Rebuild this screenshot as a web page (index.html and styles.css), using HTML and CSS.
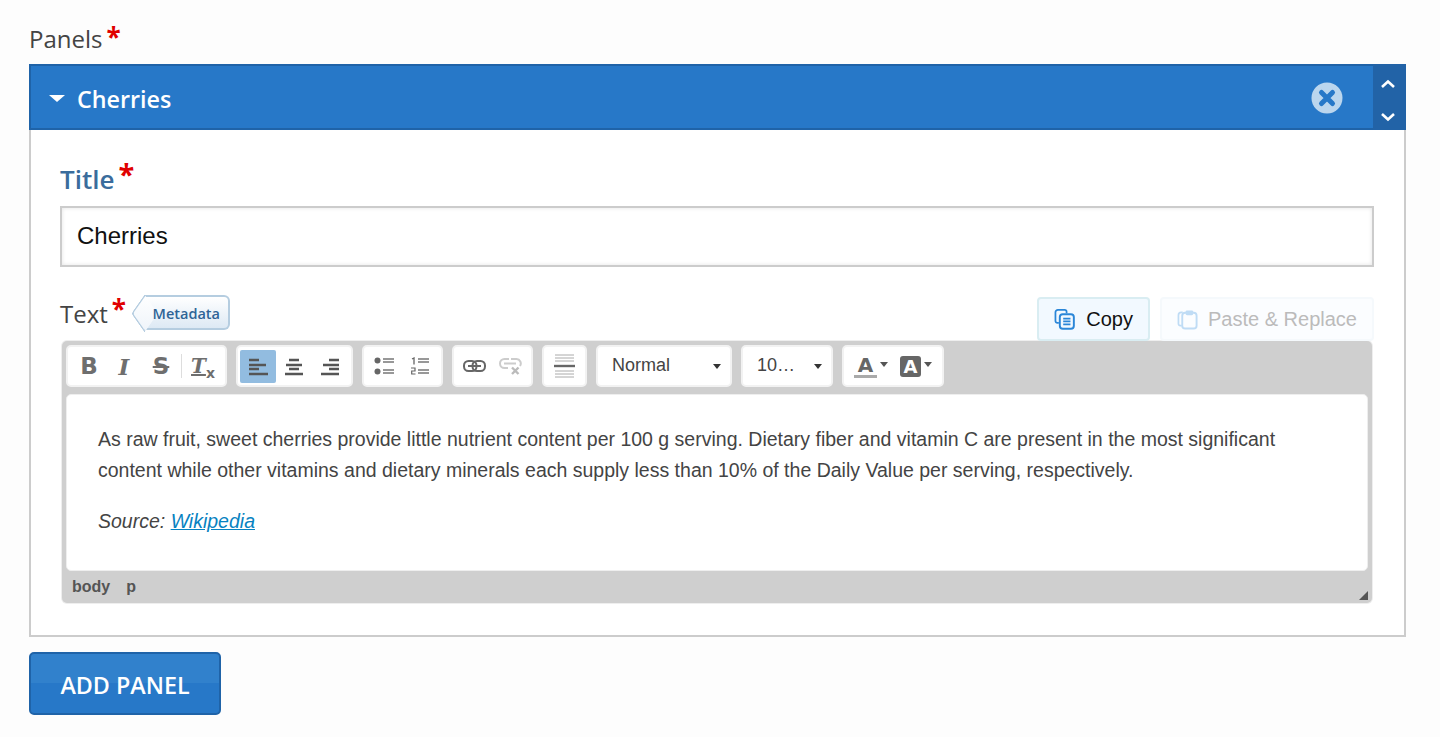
FILE: index.html
```html
<!DOCTYPE html>
<html lang="en">
<head>
<meta charset="utf-8">
<title>Panels</title>
<link rel="stylesheet" href="styles.css">
</head>
<body>
<main class="page">
  <div class="panels-label">Panels<span class="req">*</span></div>
  <section class="panel">
    <header class="panel-head">
      <span class="caret"></span>
      <span class="panel-title">Cherries</span>
      <svg class="close" width="32" height="32" viewBox="0 0 32 32"><circle cx="16" cy="16" r="15.5" fill="#bbd6ee"/><path d="M10.5 10.5l11 11M21.5 10.5l-11 11" stroke="#2778c8" stroke-width="5" stroke-linecap="round"/></svg>
      <div class="handle">
        <svg width="16" height="10" viewBox="0 0 16 10"><path d="M2 8l6-5.500L14 8" fill="none" stroke="#fff" stroke-width="2.600"/></svg>
        <svg width="16" height="10" viewBox="0 0 16 10"><path d="M2 2l6 5.500L14 2" fill="none" stroke="#fff" stroke-width="2.600"/></svg>
      </div>
    </header>
    <div class="panel-body">
      <div class="title-label">Title<span class="req">*</span></div>
      <div class="input">Cherries</div>
      <div class="text-row">
        <div class="text-label">Text<span class="req">*</span><span class="tag"><span class="tag-text">Metadata</span></span></div>
        <div class="actions">
          <button class="act act-copy">
            <svg width="22" height="22" viewBox="0 0 22 22"><path d="M5 15H3.500A2 2 0 0 1 1.500 13V4A2.500 2.500 0 0 1 4 1.500h7A2 2 0 0 1 13 3.500V5" fill="none" stroke="#2a86d8" stroke-width="1.800"/><rect x="6" y="6" width="14.500" height="15" rx="3" fill="none" stroke="#2a86d8" stroke-width="2"/><path d="M9.500 10.500h7.500M9.500 13.500h7.500M9.500 16.500h7.500" stroke="#2a86d8" stroke-width="1.800"/></svg>
            Copy
          </button>
          <button class="act act-paste">
            <svg width="22" height="22" viewBox="0 0 22 22"><path d="M5 18H3.500A2 2 0 0 1 1.500 16V7A3 3 0 0 1 4.500 4H6" fill="none" stroke="#bfdcf5" stroke-width="1.800"/><rect x="5.500" y="4.500" width="15" height="16.500" rx="3" fill="none" stroke="#bfdcf5" stroke-width="2"/><rect x="9" y="2" width="8" height="5" rx="1.500" fill="#bfdcf5"/></svg>
            Paste &amp; Replace
          </button>
        </div>
      </div>
      <div class="editor">
        <div class="toolbar">
          <div class="group group-basic">
            <span class="btn g-b">B</span>
            <span class="btn g-i">I</span>
            <span class="btn g-s">S</span>
            <span class="sep"></span>
            <span class="btn g-t"><span class="g-t-letter">T</span><small>x</small></span>
          </div>
          <div class="group group-align">
            <span class="btn on"><svg width="20" height="19" viewBox="0 0 20 19"><path d="M1 3h10M1 8h17M1 12h10M1 17h19" stroke="#555" stroke-width="2.600"/></svg></span>
            <span class="btn"><svg width="20" height="19" viewBox="0 0 20 19"><path d="M5 3h10M2 8h16M5 12h10M1 17h18" stroke="#555" stroke-width="2.600"/></svg></span>
            <span class="btn"><svg width="20" height="19" viewBox="0 0 20 19"><path d="M9 3h10M3 8h16M9 12h10M1 17h18" stroke="#555" stroke-width="2.600"/></svg></span>
          </div>
          <div class="group group-two">
            <span class="btn"><svg width="20" height="18" viewBox="0 0 20 18"><circle cx="3.500" cy="3.500" r="3" fill="#666"/><circle cx="3.500" cy="14.500" r="3" fill="#666"/><path d="M9 2h11M9 5h11M9 13h11M9 16h11" stroke="#777" stroke-width="1.300"/></svg></span>
            <span class="btn"><svg width="18" height="18" viewBox="0 0 18 18"><path d="M1 2l2-1v6.500" fill="none" stroke="#666" stroke-width="1.300"/><path d="M0 11h4v3H.7v3H4.500" fill="none" stroke="#666" stroke-width="1.200"/><path d="M7 2h11M7 5h11M7 13h11M7 16h11" stroke="#777" stroke-width="1.300"/></svg></span>
          </div>
          <div class="group group-two">
            <span class="btn"><svg width="23" height="12" viewBox="0 0 23 12"><rect x="1" y="1" width="12.500" height="10" rx="4.500" fill="none" stroke="#666" stroke-width="2"/><rect x="9.500" y="1" width="12.500" height="10" rx="4.500" fill="none" stroke="#666" stroke-width="2"/><path d="M5 6h13" stroke="#666" stroke-width="2"/></svg></span>
            <span class="btn"><svg width="23" height="18" viewBox="0 0 23 18"><path d="M9 11H5.500a4.500 4.500 0 0 1 0-9H10M12 2h5.500a4.500 4.500 0 0 1 3.500 7M5 6.500h12" fill="none" stroke="#ccc" stroke-width="2"/><path d="M13 10.500l6.500 6.500M19.500 10.500L13 17" stroke="#bbb" stroke-width="2.400"/></svg></span>
          </div>
          <div class="group group-one">
            <span class="btn"><svg width="21" height="24" viewBox="0 0 21 24"><path d="M1 1h19M1 4h19M1 7h19M1 17h19M1 20h19M1 23h19" stroke="#aaa" stroke-width="1"/><path d="M0 12h21" stroke="#666" stroke-width="2.400"/></svg></span>
          </div>
          <div class="combo combo-format"><span class="combo-text">Normal</span><span class="arrow"></span></div>
          <div class="combo combo-size"><span class="combo-text">10…</span><span class="arrow"></span></div>
          <div class="group group-color">
            <span class="color"><span class="letter">A</span><span class="arrow small"></span></span>
            <span class="color"><span class="letter boxed">A</span><span class="arrow small"></span></span>
          </div>
        </div>
        <div class="content">
          <p>As raw fruit, sweet cherries provide little nutrient content per 100 g serving. Dietary fiber and vitamin C are present in the most significant content while other vitamins and dietary minerals each supply less than 10% of the Daily Value per serving, respectively.</p>
          <p class="source"><em>Source: <a href="#">Wikipedia</a></em></p>
        </div>
        <div class="status"><span>body</span><span>p</span><i class="resize"></i></div>
      </div>
    </div>
  </section>
  <button class="add">ADD PANEL</button>
</main>
</body>
</html>
```
FILE: styles.css
```css
* { box-sizing: border-box; }
html, body { margin: 0; height: 100%; }
body {
  background: #fdfdfd;
  font-family: "Open Sans", sans-serif;
  color: #444;
  overflow: hidden;
}
.page { padding: 0 34px 0 29px; }
.req {
  color: #e00000;
  font-family: "Open Sans", sans-serif;
  font-size: 26px;
  font-weight: 700;
  line-height: 0;
  margin-left: 4px;
  position: relative;
  top: -1px;
}
.panels-label {
  height: 64px;
  padding-top: 21px;
  font-size: 24px;
  line-height: 36px;
}
.panel-head {
  height: 66px;
  display: flex;
  align-items: center;
  background: #2778c8;
  border: solid #1f63a8;
  border-width: 2px 0 2px 2px;
  color: #fff;
}
.caret {
  width: 0;
  height: 0;
  border: 8px solid transparent;
  border-top: 7px solid #fff;
  border-bottom: 0;
  margin: 3px 12px 0 18px;
}
.panel-title { font-size: 23.300px; font-weight: 600; flex: 1; padding-top: 3px; }
.close { margin-right: 30px; margin-top: 2px; }
.handle {
  width: 33px;
  height: 66px;
  margin: -2px 0;
  background: #2263a7;
  display: flex;
  flex-direction: column;
  align-items: center;
  justify-content: space-between;
  padding: 15px 3px 8px 0;
}
.panel-body {
  background: #fff;
  border: 2px solid #ccc;
  border-top: 0;
  height: 507px;
  padding: 0 30px 0 29px;
}
.title-label {
  height: 76px;
  padding-top: 29px;
  font-size: 26px;
  line-height: 40px;
  font-weight: 600;
  color: #3a6c9c;
}
.title-label .req { font-size: 29px; top: -4px; }
.input {
  height: 61px;
  border: 2px solid #ccc;
  box-shadow: inset 0 0 4px #e4e4e4;
  padding-left: 15px;
  font: 24px/56px "Liberation Sans", sans-serif;
  color: #111;
}
.text-row {
  height: 73px;
  display: flex;
  justify-content: space-between;
  align-items: flex-end;
}
.text-label {
  font-size: 24px;
  line-height: 36px;
  display: flex;
  align-items: center;
  align-self: flex-start;
  margin-top: 29px;
}
.text-label .req { line-height: 36px; top: -5px; height: 36px; }
.tag {
  position: relative;
  margin-left: 18px;
  margin-top: -3px;
  height: 35px;
  width: 86px;
  border: 2px solid #b5cde0;
  border-left: 0;
  border-radius: 0 6px 6px 0;
  background: linear-gradient(#fff, #dde9f4);
  font-size: 14.500px;
  font-weight: 600;
  line-height: 33px;
  color: #2f6496;
  text-align: right;
  padding-right: 8px;
}
.tag::before {
  content: "";
  position: absolute;
  left: -12.500px;
  top: 3px;
  width: 25px;
  height: 25px;
  transform: scaleX(.7) rotate(45deg);
  border: solid #b5cde0;
  border-width: 0 0 2px 2px;
  border-radius: 0 0 0 4px;
  background: linear-gradient(135deg, #fff, #eef4fa);
}
.tag-text { position: relative; }
.actions { display: flex; gap: 10px; margin-bottom: -1px; position: relative; }
.act {
  height: 44px;
  border-radius: 4px;
  font: 20px "Liberation Sans", sans-serif;
  display: flex;
  align-items: center;
  gap: 10px;
  padding: 0 15px;
  white-space: nowrap;
}
.act-copy { width: 113px; background: #f2f9ff; border: 2px solid #d9edf2; color: #111; gap: 11px; }
.act-paste { width: 214px; background: #fbfdff; border: 2px solid #f5f9fc; color: #bbb; }
.editor {
  margin: 1px 2px 0;
  height: 262px;
  background: #cfcfcf;
  border-radius: 5px;
  box-shadow: 0 0 0 1px #eee;
  padding: 4px;
  display: flex;
  flex-direction: column;
  font-family: "Liberation Sans", sans-serif;
}
.toolbar { display: flex; gap: 9px; height: 42px; flex: none; }
.group, .combo {
  background: #fff;
  border: 2px solid #f2f2f2;
  border-radius: 5px;
  height: 42px;
  display: flex;
  align-items: center;
  padding: 0 2px;
}
.group-basic { width: 161px; }
.group-align { width: 117px; }
.group-two { width: 81px; }
.group-one { width: 45px; }
.btn {
  width: 36px;
  height: 33px;
  border-radius: 2px;
  display: flex;
  align-items: center;
  justify-content: center;
  color: #6e6e6e;
  flex: none;
}
.btn.on { background: #92bce0; }
.g-b { font: bold 23px "DejaVu Sans", sans-serif; padding-left: 2px; }
.g-i { font: italic bold 23px "DejaVu Serif", serif; }
.g-s { font: bold 23px "DejaVu Sans", sans-serif; text-decoration: line-through; padding-left: 2px; }
.g-t { font: italic bold 20px "DejaVu Serif", serif; }
.g-t-letter { text-decoration: underline; text-decoration-thickness: 2px; }
.g-t small { display: inline-block; font: bold 14px/14px "DejaVu Sans", sans-serif; position: relative; top: 7px; }
.sep { width: 1px; height: 24px; background: #ddd; margin: 0 3px; flex: none; }
.combo { font-size: 18px; color: #444; padding: 0 9px 0 14px; justify-content: space-between; }
.combo-text { position: relative; top: -1px; }
.combo-format { width: 136px; }
.combo-size { width: 92px; }
.arrow {
  width: 0;
  height: 0;
  border: 4px solid transparent;
  border-top: 5px solid #333;
  border-bottom: 0;
}
.arrow.small { border-top-color: #555; margin-left: 3px; margin-top: -3px; }
.group-color { width: 102px; padding: 0 8px 0 10px; gap: 12px; }
.color { display: flex; align-items: center; }
.letter {
  font: bold 20px/20px "DejaVu Sans", sans-serif;
  color: #666;
  width: 23px;
  text-align: center;
  border-bottom: 3px solid #aaa;
}
.letter.boxed {
  width: 21px;
  height: 21px;
  border: 0;
  border-radius: 3px;
  background: #666;
  color: #fff;
  font-size: 18px;
  line-height: 21px;
}
.content {
  margin-top: 7px;
  height: 177px;
  flex: none;
  background: #fff;
  border: 1px solid #eee;
  border-radius: 5px;
  padding: 29px 31px 0;
  font-size: 19.500px;
  line-height: 31px;
  color: #444;
}
.content p { margin: 0 0 20px; }
.content a { color: #0782c1; }
.status {
  position: relative;
  flex: 1;
  display: flex;
  gap: 16px;
  align-items: center;
  padding: 3px 0 0 6px;
  font-size: 16px;
  font-weight: bold;
  color: #555;
}
.resize {
  position: absolute;
  right: 0;
  bottom: -1px;
  width: 9px;
  height: 9px;
  background: #555;
  clip-path: polygon(100% 0, 100% 100%, 0 100%);
}
.add {
  margin-top: 15px;
  display: block;
  width: 192px;
  height: 63px;
  border: 2px solid #1f63a8;
  border-radius: 5px;
  background: linear-gradient(#3181cc 50%, #2778c8 50%);
  color: #fff;
  font: 600 23.300px "Open Sans", sans-serif;
  padding: 3px 0 0;
}
```
